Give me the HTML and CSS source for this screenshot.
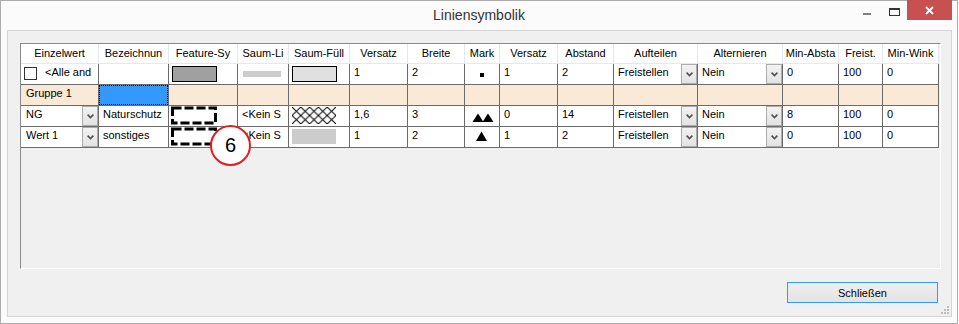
FILE: index.html
```html
<!DOCTYPE html>
<html lang="de">
<head>
<meta charset="utf-8">
<title>Liniensymbolik</title>
<link rel="stylesheet" href="styles.css">
</head>
<body>
<div class="window">
  <div class="titlebar">
    <div></div>
    <div class="title">Liniensymbolik</div>
    <div class="controls">
      <span class="min"></span>
      <span class="max"></span>
      <span class="close"><svg width="9" height="9" viewBox="0 0 9 9"><path d="M1 1 L8 8 M8 1 L1 8" stroke="#fff" stroke-width="1.8" fill="none"/></svg></span>
    </div>
  </div>
  <div class="panel">
    <div class="grid">
      <div class="row head">
        <div class="h">Einzelwert</div>
        <div class="h">Bezeichnun</div>
        <div class="h">Feature-Sy</div>
        <div class="h">Saum-Li</div>
        <div class="h">Saum-Füll</div>
        <div class="h">Versatz</div>
        <div class="h">Breite</div>
        <div class="h">Mark</div>
        <div class="h">Versatz</div>
        <div class="h">Abstand</div>
        <div class="h">Aufteilen</div>
        <div class="h">Alternieren</div>
        <div class="h">Min-Absta</div>
        <div class="h">Freist.</div>
        <div class="h">Min-Wink</div>
      </div>

      <div class="row">
        <div class="c chkcell"><span class="chk"></span><span class="t">&lt;Alle and</span></div>
        <div class="c"></div>
        <div class="c pic"><svg width="68" height="20"><rect x="3.5" y="2.5" width="44" height="15" fill="#a0a0a0" stroke="#000"/></svg></div>
        <div class="c pic"><svg width="50" height="20"><rect x="5" y="7" width="38" height="6" fill="#cccccc"/></svg></div>
        <div class="c pic"><svg width="60" height="20"><rect x="3.5" y="2.5" width="44" height="15" fill="#e0e0e0" stroke="#000"/></svg></div>
        <div class="c">1</div>
        <div class="c">2</div>
        <div class="c pic"><svg width="34" height="20"><rect x="15" y="9" width="4" height="4" fill="#000"/></svg></div>
        <div class="c">1</div>
        <div class="c">2</div>
        <div class="c combo"><span class="t">Freistellen</span><span class="dd"><svg width="7" height="5"><path d="M0.6 0.6 L3.5 3.6 L6.4 0.6" stroke="#505050" stroke-width="1.6" fill="none"/></svg></span></div>
        <div class="c combo"><span class="t">Nein</span><span class="dd"><svg width="7" height="5"><path d="M0.6 0.6 L3.5 3.6 L6.4 0.6" stroke="#505050" stroke-width="1.6" fill="none"/></svg></span></div>
        <div class="c">0</div>
        <div class="c">100</div>
        <div class="c">0</div>
      </div>

      <div class="row grp">
        <div class="c first">Gruppe 1</div>
        <div class="c focus"><span class="focusbox"></span></div>
        <div class="c"></div>
        <div class="c"></div>
        <div class="c"></div>
        <div class="c"></div>
        <div class="c"></div>
        <div class="c"></div>
        <div class="c"></div>
        <div class="c"></div>
        <div class="c"></div>
        <div class="c"></div>
        <div class="c"></div>
        <div class="c"></div>
        <div class="c"></div>
      </div>

      <div class="row">
        <div class="c combo first"><span class="t">NG</span><span class="dd"><svg width="7" height="5"><path d="M0.6 0.6 L3.5 3.6 L6.4 0.6" stroke="#505050" stroke-width="1.6" fill="none"/></svg></span></div>
        <div class="c">Naturschutz</div>
        <div class="c pic"><svg width="68" height="20"><rect x="3.5" y="2" width="43" height="15" fill="none" stroke="#000" stroke-width="3" stroke-dasharray="9 3"/></svg></div>
        <div class="c">&lt;Kein S</div>
        <div class="c pic"><svg width="60" height="20"><defs><pattern id="hatch" x="3" y="1" width="8.8" height="8.5" patternUnits="userSpaceOnUse"><path d="M0 0 L8.8 8.5 M8.8 0 L0 8.5" stroke="#000" stroke-width="1" fill="none"/></pattern></defs><rect x="3" y="1" width="44" height="17" fill="url(#hatch)"/></svg></div>
        <div class="c">1,6</div>
        <div class="c">3</div>
        <div class="c pic"><svg width="34" height="20"><polygon points="7.5,16 13,7.5 18.5,16" fill="#000"/><polygon points="17.5,16 23,7.5 28.5,16" fill="#000"/></svg></div>
        <div class="c">0</div>
        <div class="c">14</div>
        <div class="c combo"><span class="t">Freistellen</span><span class="dd"><svg width="7" height="5"><path d="M0.6 0.6 L3.5 3.6 L6.4 0.6" stroke="#505050" stroke-width="1.6" fill="none"/></svg></span></div>
        <div class="c combo"><span class="t">Nein</span><span class="dd"><svg width="7" height="5"><path d="M0.6 0.6 L3.5 3.6 L6.4 0.6" stroke="#505050" stroke-width="1.6" fill="none"/></svg></span></div>
        <div class="c">8</div>
        <div class="c">100</div>
        <div class="c">0</div>
      </div>

      <div class="row">
        <div class="c combo first"><span class="t">Wert 1</span><span class="dd"><svg width="7" height="5"><path d="M0.6 0.6 L3.5 3.6 L6.4 0.6" stroke="#505050" stroke-width="1.6" fill="none"/></svg></span></div>
        <div class="c">sonstiges</div>
        <div class="c pic"><svg width="68" height="20"><rect x="3.5" y="2" width="43" height="15" fill="none" stroke="#000" stroke-width="3" stroke-dasharray="9 3"/></svg></div>
        <div class="c">&lt;Kein S</div>
        <div class="c pic"><svg width="60" height="20"><rect x="3" y="2" width="44" height="15" fill="#cccccc"/></svg></div>
        <div class="c">1</div>
        <div class="c">2</div>
        <div class="c pic"><svg width="34" height="20"><polygon points="11,14 16.5,4.5 22,14" fill="#000"/></svg></div>
        <div class="c">1</div>
        <div class="c">2</div>
        <div class="c combo"><span class="t">Freistellen</span><span class="dd"><svg width="7" height="5"><path d="M0.6 0.6 L3.5 3.6 L6.4 0.6" stroke="#505050" stroke-width="1.6" fill="none"/></svg></span></div>
        <div class="c combo"><span class="t">Nein</span><span class="dd"><svg width="7" height="5"><path d="M0.6 0.6 L3.5 3.6 L6.4 0.6" stroke="#505050" stroke-width="1.6" fill="none"/></svg></span></div>
        <div class="c">0</div>
        <div class="c">100</div>
        <div class="c">0</div>
      </div>
    </div>
    <div class="footer">
      <button class="btn">Schließen</button>
    </div>
    <svg class="grip" width="8" height="8" viewBox="0 0 8 8">
      <rect x="6" y="0" width="2" height="2" fill="#bdbdbd"/>
      <rect x="3" y="3" width="2" height="2" fill="#bdbdbd"/>
      <rect x="6" y="3" width="2" height="2" fill="#bdbdbd"/>
      <rect x="0" y="6" width="2" height="2" fill="#bdbdbd"/>
      <rect x="3" y="6" width="2" height="2" fill="#bdbdbd"/>
      <rect x="6" y="6" width="2" height="2" fill="#bdbdbd"/>
    </svg>
  </div>
  <div class="badge">6</div>
</div>
</body>
</html>
```
FILE: styles.css
```css
* { box-sizing: border-box; }

body {
  margin: 0;
  background: #ffffff;
  font-family: "Liberation Sans", Arial, sans-serif;
  font-size: 11px;
  color: #000;
}

.window {
  position: relative;
  width: 958px;
  height: 324px;
  border: 1px solid #acacac;
  background: #fbfbfb;
  display: flex;
  flex-direction: column;
}

.titlebar {
  height: 29px;
  flex: none;
  display: grid;
  grid-template-columns: 1fr auto 1fr;
}

.title {
  font-size: 14px;
  line-height: 28px;
  color: #333;
}

.controls {
  justify-self: end;
  display: flex;
  align-items: flex-start;
  margin-top: -1px;
  padding-right: 5px;
}

.min {
  width: 8px;
  height: 2px;
  background: #808080;
  margin-top: 13px;
  margin-right: 18px;
}

.max {
  width: 11px;
  height: 8px;
  border: 1px solid #333;
  border-top-width: 2px;
  margin-top: 8px;
  margin-right: 7px;
}

.close {
  width: 45px;
  height: 20px;
  background: #c75050;
  display: flex;
  align-items: center;
  justify-content: center;
}

.panel {
  position: relative;
  flex: 1;
  margin: 0 5px 6px 6px;
  border: 1px solid #d5d5d5;
  background: #f0f0f0;
  padding: 12px 10px 0 12px;
}

.grid {
  height: 226px;
  border: 1px solid;
  border-color: #8a8a8a #ffffff #ffffff #8a8a8a;
  background: #f0f0f0;
}

.row {
  display: grid;
  grid-template-columns: 78px 70px 69px 51px 61px 58px 57px 35px 58px 56px 84px 85px 56px 44px 56px;
}

.h {
  height: 20px;
  line-height: 19px;
  background: #fff;
  border-right: 1px solid #e1e9f4;
  border-bottom: 1px solid #e1e9f4;
  text-align: center;
  white-space: nowrap;
  overflow: hidden;
}

.c {
  height: 21px;
  line-height: 15px;
  padding: 1px 0 0 4px;
  background: #fff;
  border-right: 1px solid #6b6b6b;
  border-bottom: 1px solid #6b6b6b;
  white-space: nowrap;
  overflow: hidden;
}

.c.first { padding-left: 5px; }

.grp .c { background: #fae9d7; }

.c.focus {
  padding: 0;
  background: #3399ff;
}

.focusbox {
  display: block;
  width: 100%;
  height: 100%;
  border: 1px dotted #000;
}

.c.pic { padding: 0; }
.c.pic svg { display: block; }

.chkcell {
  display: flex;
  align-items: flex-start;
  padding: 0 0 0 3px;
}

.chk {
  flex: none;
  width: 13px;
  height: 13px;
  border: 1px solid #333;
  background: #fff;
  margin-top: 3px;
}

.chkcell .t {
  margin-left: 8px;
  padding-top: 1px;
}

.combo {
  display: flex;
  padding-top: 0;
  padding-right: 0;
}

.combo .t {
  flex: 1;
  padding-top: 1px;
  overflow: hidden;
}

.dd {
  flex: none;
  width: 16px;
  height: 20px;
  border: 1px solid #acacac;
  background: linear-gradient(#f2f2f2, #e3e3e3);
  display: flex;
  align-items: center;
  justify-content: center;
}

.dd svg { display: block; }

.footer {
  display: flex;
  justify-content: flex-end;
  padding-top: 13px;
}

.btn {
  width: 151px;
  height: 21px;
  margin-right: 3px;
  padding: 0;
  border: 1px solid #3399ff;
  background: linear-gradient(#efefef, #e3e3e3);
  font-family: "Liberation Sans", Arial, sans-serif;
  font-size: 11px;
  color: #000;
}

.grip {
  position: absolute;
  right: 2px;
  bottom: 2px;
}

.badge {
  position: absolute;
  left: 209px;
  top: 124px;
  width: 41px;
  height: 41px;
  border: 2px solid #e51c1c;
  border-radius: 50%;
  background: #fff;
  font-size: 20px;
  line-height: 37px;
  text-align: center;
  color: #000;
}
```
